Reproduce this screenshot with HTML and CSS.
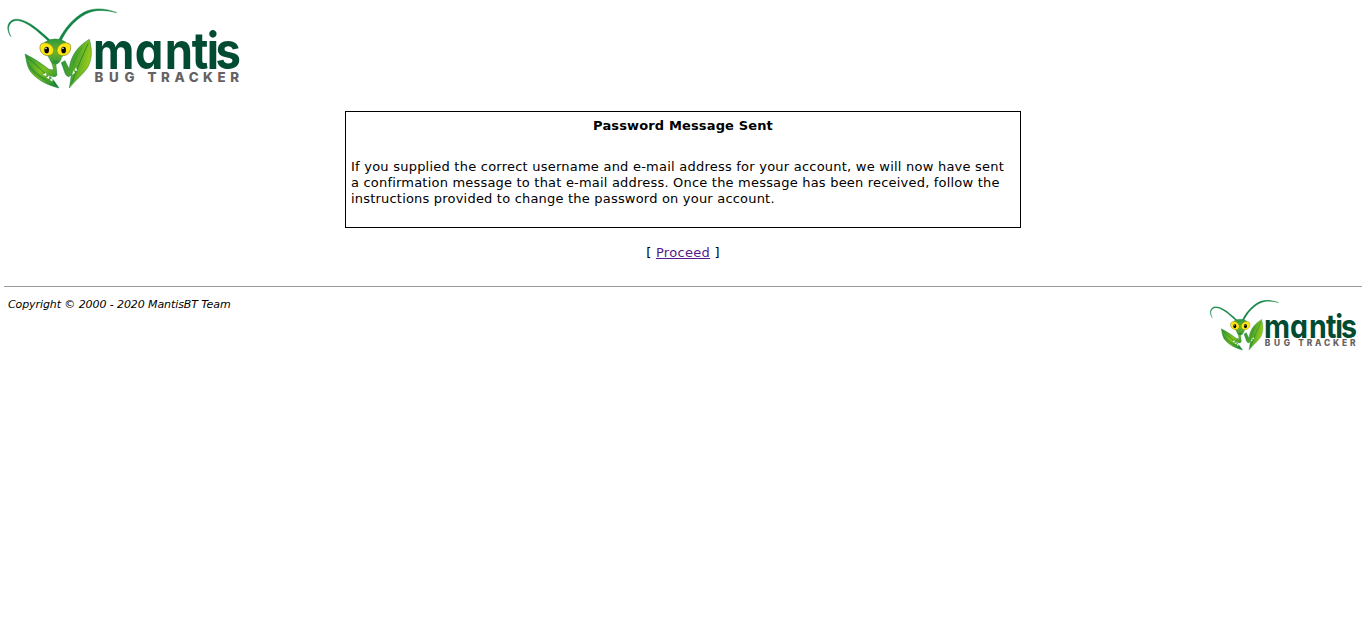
FILE: index.html
```html
<!DOCTYPE html>
<html lang="en">
<head>
<meta charset="utf-8">
<title>MantisBT</title>
<link rel="stylesheet" href="styles.css">
</head>
<body>
<header>
<svg class="logo" viewBox="4 4 242 90" role="img" aria-label="Mantis Bug Tracker">
  <defs>
    <linearGradient id="leaf" x1="0" y1="0" x2="1" y2="1">
      <stop offset="0" stop-color="#2f9634"/><stop offset=".5" stop-color="#80c01d"/><stop offset="1" stop-color="#087d39"/>
    </linearGradient>
    <linearGradient id="leaf-right" x1="0" y1="0" x2="1" y2=".3">
      <stop offset="0" stop-color="#299136"/><stop offset=".55" stop-color="#50a72b"/><stop offset="1" stop-color="#9bcc17"/>
    </linearGradient>
    <linearGradient id="face" x1="0" y1="0" x2="0" y2="1">
      <stop offset="0" stop-color="#2b963b"/><stop offset=".5" stop-color="#6eb52a"/><stop offset="1" stop-color="#34983a"/>
    </linearGradient>
    <g id="mantis-logo">
      <g transform="scale(.33333)">
        <path class="antenna" d="M33 110C24 98 19 80 28 68C45 44 89 66 117 91Q138 108 153 123L146 124Q128 108 112 94C86 72 48 48 31 71C22 82 26 98 33 110Z"/>
        <path class="antenna" d="M176 121C192 86 219 55 253 36C282 22 318 25 350 38C316 30 285 27 257 42C222 61 198 92 183 123Z"/>
        <path class="outline" fill="url(#leaf)" d="M75 162Q108 177 147 208L161 210L155 187L167 188L171 225Q168 231 161 230L147 226Q162 240 177 264C147 257 113 241 95 219C79 200 80 180 75 162Z"/>
        <path class="outline" fill="url(#leaf-right)" d="M268 118C277 149 277 180 262 204C247 226 227 239 208 264Q212 240 214 224L207 230Q200 230 196 222L184 188L195 182L208 208C210 173 229 141 268 118Z"/>
        <path class="vein" d="M79 169Q123 205 169 256M265 130Q243 176 214 251"/>
        <path class="shade" d="M80 180Q101 216 151 246Q106 233 89 207ZM260 131Q231 153 217 204Q222 159 260 131Z"/>
        <path class="thorn" d="M128 225L138 218L140 228ZM139 233L148 226L148 237ZM149 239L158 233L157 245ZM216 224L221 211L225 219ZM223 211L228 202L232 213Z"/>
        <path class="outline" fill="url(#face)" d="M134 127Q149 116 166 117Q183 116 198 127L200 157Q184 167 182 180Q177 192 166 193Q154 192 150 180Q147 167 132 158Z"/>
        <path class="eye" d="M124 131C141 123 160 135 161 151C161 166 146 171 132 164C120 158 116 140 124 131Z"/>
        <path class="eye" d="M208 131C191 123 172 135 171 151C171 166 186 171 200 164C212 158 216 140 208 131Z"/>
        <ellipse cx="140" cy="150" rx="7" ry="10"/><ellipse cx="191" cy="150" rx="7" ry="10"/>
        <circle class="glint" cx="138" cy="145" r="2.5"/><circle class="glint" cx="189" cy="145" r="2.5"/>
        <path class="mouth" d="M160 183Q166 187 173 183"/>
      </g>
      <text class="wordmark" transform="scale(.89 1)" x="104.5 151.3 185.2 215.5 232.2 242.2" y="69.2">mantis</text>
      <text class="tagline" x="94.5" y="81.8" textLength="40">BUG</text>
      <text class="tagline" x="147.5" y="81.8" textLength="91.5">TRACKER</text>
    </g>
  </defs>
  <use href="#mantis-logo"/>
</svg>
</header>
<main>
  <section class="message">
    <h1>Password Message Sent</h1>
    <p><span class="lead">If you supplied the correct username and e-mail address for your account, we will now have sent</span><br>a confirmation message to that e-mail address. Once the message has been received, follow the<br>instructions provided to change the password on your account.</p>
  </section>
  <div class="proceed">[ <a href="#">Proceed</a> ]</div>
</main>
<footer>
  <address>Copyright © 2000 - 2020 MantisBT Team</address>
  <svg class="footer-logo" viewBox="4 4 242 90" role="img" aria-label="Mantis Bug Tracker"><use href="#mantis-logo"/></svg>
</footer>
</body>
</html>
```
FILE: styles.css
```css
* { box-sizing: border-box; }
body { margin: 4px; background: #fff; color: #000; font: 13px/16px Verdana, "DejaVu Sans", sans-serif; }
header { height: 107px; }
.logo { display: block; width: 242px; height: 90px; }
.antenna { fill: #118343; stroke: #118343; stroke-width: 1.5; }
.outline { stroke: #16823a; stroke-width: 1.5; }
.vein { fill: none; stroke: #087638; stroke-width: 2; }
.shade { fill: #20863b; opacity: .55; }
.thorn { fill: #fff; }
.eye { fill: #ffe512; stroke: #79821b; stroke-width: 2; }
.glint { fill: #fff; }
.mouth { fill: none; stroke: #17662d; stroke-width: 2; }
.wordmark { fill: #004b32; font: 700 51px Inter, sans-serif; font-feature-settings: "cv11"; }
.tagline { fill: #666263; font: 800 13.3px Inter, sans-serif; }
.message { width: 676px; height: 117px; margin: 0 auto; padding: 6px 5px; border: 1px solid #000; }
h1 { margin: 0 0 25px; font-size: 13px; line-height: 16px; letter-spacing: .14px; text-align: center; }
p { margin: 0; white-space: nowrap; letter-spacing: .2px; }
.lead { letter-spacing: .23px; }
.proceed { margin-top: 17px; text-align: center; letter-spacing: .3px; }
a { color: #551a8b; }
footer { display: flex; justify-content: space-between; align-items: flex-start; margin-top: 25px; padding: 10px 2px 0 4px; border-top: 1px solid #999; }
address { font-size: 11px; letter-spacing: -.09px; }
.footer-logo { width: 152px; height: 57px; }
```
